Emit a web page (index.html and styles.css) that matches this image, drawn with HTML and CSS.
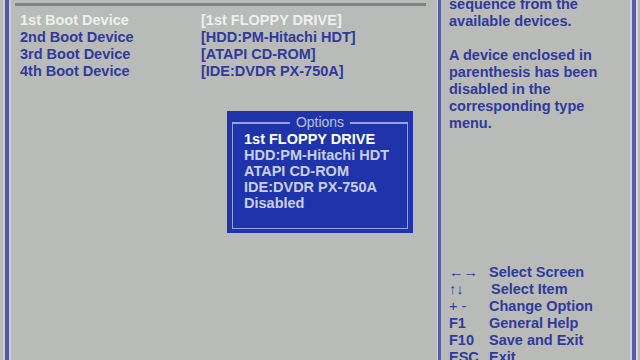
FILE: index.html
```html
<!DOCTYPE html>
<html>
<head>
<meta charset="utf-8">
<link rel="stylesheet" href="styles.css">
</head>
<body>
<div class="screen">
  <div class="edge edge-left"></div>
  <div class="main">
    <div class="topline"></div>
    <div class="rows">
      <div class="row current"><span class="label">1st Boot Device</span><span class="value">[1st FLOPPY DRIVE]</span></div>
      <div class="row"><span class="label">2nd Boot Device</span><span class="value">[HDD:PM-Hitachi HDT]</span></div>
      <div class="row"><span class="label">3rd Boot Device</span><span class="value">[ATAPI CD-ROM]</span></div>
      <div class="row"><span class="label">4th Boot Device</span><span class="value">[IDE:DVDR PX-750A]</span></div>
    </div>
    <div class="options">
      <div class="opt-frame">
        <div class="opt-title">Options</div>
        <div class="opt-list">
          <div class="opt selected">1st FLOPPY DRIVE</div>
          <div class="opt">HDD:PM-Hitachi HDT</div>
          <div class="opt">ATAPI CD-ROM</div>
          <div class="opt">IDE:DVDR PX-750A</div>
          <div class="opt">Disabled</div>
        </div>
      </div>
    </div>
  </div>
  <div class="divider"></div>
  <div class="help">
    <div class="help-text">
      <p>sequence from the<br>available devices.</p>
      <p>A device enclosed in<br>parenthesis has been<br>disabled in the<br>corresponding type<br>menu.</p>
    </div>
    <div class="keys">
      <div class="key"><span class="k">←→</span><span class="d">Select Screen</span></div>
      <div class="key"><span class="k">↑↓</span><span class="d shift">Select Item</span></div>
      <div class="key"><span class="k">+ -</span><span class="d">Change Option</span></div>
      <div class="key"><span class="k">F1</span><span class="d">General Help</span></div>
      <div class="key"><span class="k">F10</span><span class="d">Save and Exit</span></div>
      <div class="key"><span class="k">ESC</span><span class="d">Exit</span></div>
    </div>
  </div>
  <div class="edge edge-right"></div>
</div>
</body>
</html>
```

FILE: styles.css
```css
html, body {
  margin: 0;
  padding: 0;
}
body {
  width: 640px;
  height: 360px;
  overflow: hidden;
  background: #b9bbb8;
  font-family: "Liberation Sans", Arial, sans-serif;
  font-weight: bold;
  font-size: 14.5px;
  color: #2f3a9c;
}
.screen {
  display: flex;
  height: 360px;
}
.edge {
  width: 4px;
  flex: none;
  background: #4d5c9e;
}
.edge-left {
  margin-left: 5px;
  box-shadow: -2px 0 0 #c9cdd8, 2px 0 0 #c9cdd8;
}
.edge-right {
  margin-left: 1px;
  background: #5860a8;
  box-shadow: -2px 0 0 #cfd2dc, 2px 0 0 #d6d9e0;
}
.main {
  position: relative;
  width: 429px;
  flex: none;
}
.topline {
  height: 3px;
  margin: 3px 12px 0 6px;
  background: #7d828c;
}
.rows {
  padding: 6px 0 0 11px;
}
.row {
  display: flex;
  height: 17px;
  line-height: 17px;
}
.label {
  width: 181px;
}
.row.current {
  color: #eef0ee;
}
.options {
  position: absolute;
  left: 218px;
  top: 111px;
  width: 186px;
  height: 122px;
  background: #1f34aa;
  padding: 11px 5px 4px 5px;
  box-sizing: border-box;
}
.opt-frame {
  position: relative;
  height: 100%;
  border: 1px solid #97a2d6;
  border-top-width: 2px;
  box-sizing: border-box;
}
.opt-title {
  position: absolute;
  top: -11px;
  left: 50%;
  transform: translateX(-50%);
  padding: 0 6px;
  background: #1f34aa;
  color: #b9c3e2;
  font-weight: normal;
  font-size: 14px;
  line-height: 18px;
}
.opt-list {
  padding: 7px 0 0 11px;
}
.opt {
  height: 16px;
  line-height: 16px;
  color: #c9cfe6;
}
.opt.selected {
  color: #ffffff;
}
.divider {
  width: 3px;
  flex: none;
  background: #56609e;
  box-shadow: -1px 0 0 #cdd0d8;
}
.help {
  width: 190px;
  flex: none;
  display: flex;
  flex-direction: column;
  padding-left: 8px;
  box-sizing: border-box;
}
.help-text {
  margin-top: -4px;
  line-height: 17px;
}
.help-text p {
  margin: 0 0 17px 0;
}
.keys {
  margin-top: auto;
  margin-bottom: -6px;
  line-height: 17px;
}
.key {
  display: flex;
  height: 17px;
}
.k {
  width: 40px;
  font-weight: normal;
}
.k.fkey, .key:nth-child(n+4) .k {
  font-weight: bold;
}
.shift {
  padding-left: 2px;
}
```
